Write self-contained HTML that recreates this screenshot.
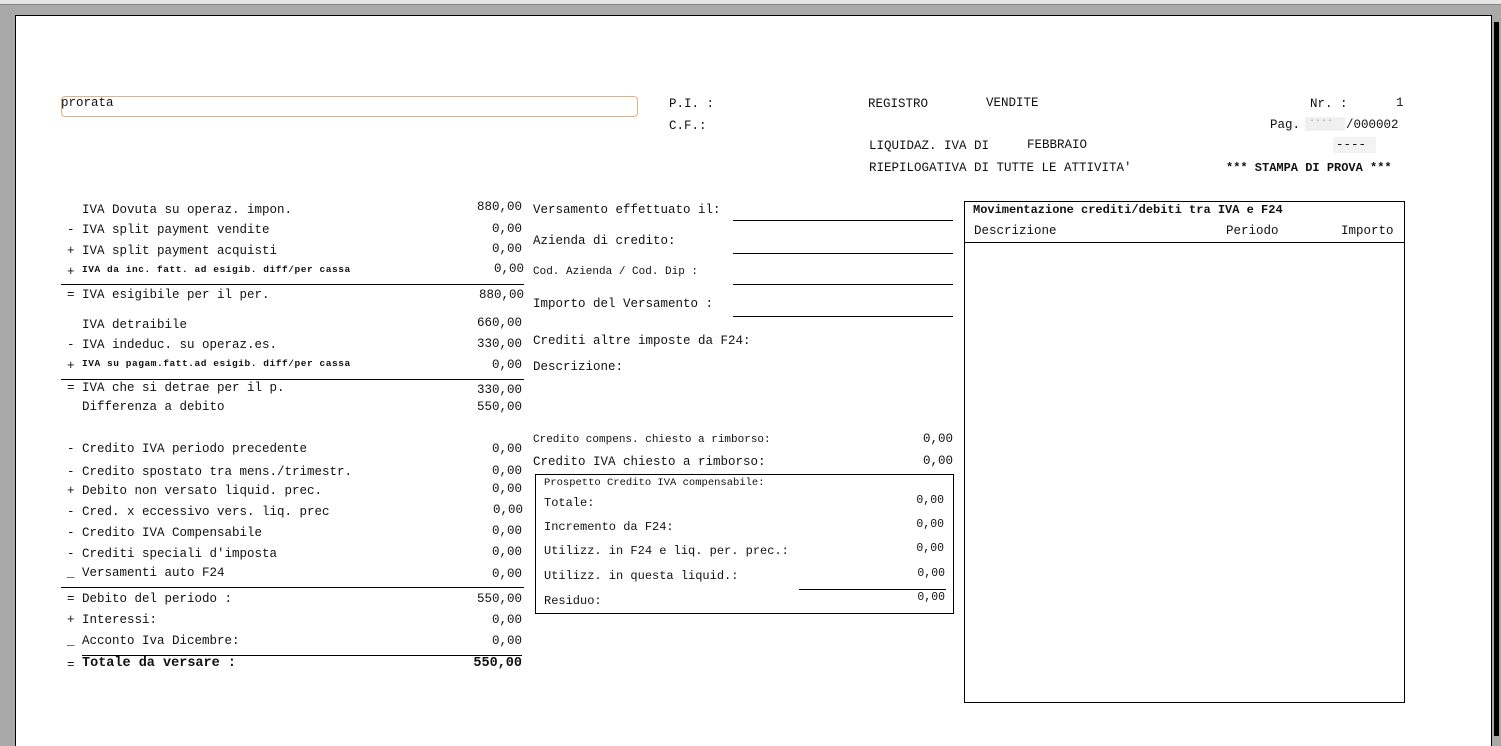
<!DOCTYPE html>
<html><head><meta charset="utf-8"><style>
html,body{margin:0;padding:0;width:1501px;height:736px;overflow:hidden;background:#a9a9a9;}
#top{position:absolute;left:0;top:0;width:1501px;height:4px;background:#e4e4e4;border-bottom:1px solid #888;}
#page{position:absolute;left:15px;top:15px;width:1475px;height:730px;background:#fff;border-left:1px solid #000;border-top:1px solid #000;border-right:1px solid #000;}
#shadow{position:absolute;left:1494px;top:22px;width:5px;height:714px;background:#000;}
.t{position:absolute;white-space:pre;font-family:"Liberation Mono","Courier New",monospace;font-size:12.5px;line-height:14px;color:#111;}
.s{font-size:11px;}
.xs{font-size:9.5px;font-weight:bold;letter-spacing:0.55px;}
.b{font-weight:bold;}
.r{text-align:right;}
.h{position:absolute;height:1px;background:#000;}
.box{position:absolute;border:1px solid #000;}
</style></head><body>
<div id="top"></div>
<div id="page"></div>
<div id="shadow"></div>

<!-- header -->
<div style="position:absolute;left:61px;top:96px;width:575px;height:19px;border:1px solid #e8b27e;border-radius:4px;"></div>
<div class="t" style="left:61px;top:96px">prorata</div>
<div class="t" style="left:669px;top:97px">P.I. :</div>
<div class="t" style="left:669px;top:119px">C.F.:</div>
<div class="t" style="left:868px;top:97px">REGISTRO</div>
<div class="t" style="left:986px;top:96px">VENDITE</div>
<div class="t" style="left:1310px;top:97px">Nr. :</div>
<div class="t" style="left:1396px;top:96px">1</div>
<div style="position:absolute;left:1305px;top:117px;width:40px;height:14px;background:#f0f0f0"></div>
<div class="t" style="left:1270px;top:118px">Pag.</div>
<div class="t" style="left:1309px;top:115px;color:#999;font-size:10px">····</div>
<div class="t" style="left:1346px;top:118px">/000002</div>
<div class="t" style="left:869px;top:139px">LIQUIDAZ. IVA DI</div>
<div class="t" style="left:1027px;top:138px">FEBBRAIO</div>
<div style="position:absolute;left:1333px;top:137px;width:43px;height:16px;background:#f3f3f3"></div>
<div class="t" style="left:1336px;top:138px">----</div>
<div class="t" style="left:869px;top:161px">RIEPILOGATIVA DI TUTTE LE ATTIVITA'</div>
<div class="t b" style="left:1226px;top:161px;font-size:12px">*** STAMPA DI PROVA ***</div>

<!-- left column -->
<div class="t" style="left:82px;top:203px">IVA Dovuta su operaz. impon.</div><div class="t r" style="right:979px;top:200px">880,00</div>
<div class="t" style="left:67px;top:223px">- IVA split payment vendite</div><div class="t r" style="right:979px;top:222px">0,00</div>
<div class="t" style="left:67px;top:244px">+ IVA split payment acquisti</div><div class="t r" style="right:979px;top:242px">0,00</div>
<div class="t" style="left:67px;top:265px">+</div><div class="t xs" style="left:82px;top:263px">IVA da inc. fatt. ad esigib. diff/per cassa</div><div class="t r" style="right:977px;top:262px">0,00</div>
<div class="h" style="left:61px;top:284px;width:463px"></div>
<div class="t" style="left:67px;top:288px">= IVA esigibile per il per.</div><div class="t r" style="right:977px;top:288px">880,00</div>
<div class="t" style="left:82px;top:318px">IVA detraibile</div><div class="t r" style="right:979px;top:316px">660,00</div>
<div class="t" style="left:67px;top:338px">- IVA indeduc. su operaz.es.</div><div class="t r" style="right:979px;top:337px">330,00</div>
<div class="t" style="left:67px;top:359px">+</div><div class="t xs" style="left:82px;top:357px">IVA su pagam.fatt.ad esigib. diff/per cassa</div><div class="t r" style="right:979px;top:358px">0,00</div>
<div class="h" style="left:61px;top:379px;width:463px"></div>
<div class="t" style="left:67px;top:381px">= IVA che si detrae per il p.</div><div class="t r" style="right:979px;top:383px">330,00</div>
<div class="t" style="left:82px;top:400px">Differenza a debito</div><div class="t r" style="right:979px;top:400px">550,00</div>
<div class="t" style="left:67px;top:442px">- Credito IVA periodo precedente</div><div class="t r" style="right:979px;top:442px">0,00</div>
<div class="t" style="left:67px;top:465px">- Credito spostato tra mens./trimestr.</div><div class="t r" style="right:979px;top:464px">0,00</div>
<div class="t" style="left:67px;top:484px">+ Debito non versato liquid. prec.</div><div class="t r" style="right:979px;top:482px">0,00</div>
<div class="t" style="left:67px;top:505px">- Cred. x eccessivo vers. liq. prec</div><div class="t r" style="right:978px;top:503px">0,00</div>
<div class="t" style="left:67px;top:526px">- Credito IVA Compensabile</div><div class="t r" style="right:979px;top:524px">0,00</div>
<div class="t" style="left:67px;top:547px">- Crediti speciali d'imposta</div><div class="t r" style="right:979px;top:545px">0,00</div>
<div class="t" style="left:67px;top:566px">_ Versamenti auto F24</div><div class="t r" style="right:979px;top:567px">0,00</div>
<div class="h" style="left:61px;top:587px;width:463px"></div>
<div class="t" style="left:67px;top:592px">= Debito del periodo :</div><div class="t r" style="right:979px;top:592px">550,00</div>
<div class="t" style="left:67px;top:613px">+ Interessi:</div><div class="t r" style="right:979px;top:613px">0,00</div>
<div class="t" style="left:67px;top:634px">_ Acconto Iva Dicembre:</div><div class="t r" style="right:979px;top:634px">0,00</div>
<div class="h" style="left:82px;top:655px;width:440px"></div>
<div class="t" style="left:67px;top:658px">=</div><div class="t b" style="left:82px;top:657px;font-size:13.5px">Totale da versare :</div><div class="t b r" style="right:979px;top:657px;font-size:13.5px">550,00</div>

<!-- middle -->
<div class="t" style="left:533px;top:203px">Versamento effettuato il:</div><div class="h" style="left:733px;top:220px;width:220px"></div>
<div class="t" style="left:533px;top:234px">Azienda di credito:</div><div class="h" style="left:733px;top:253px;width:220px"></div>
<div class="t s" style="left:533px;top:265px">Cod. Azienda / Cod. Dip :</div><div class="h" style="left:733px;top:284px;width:220px"></div>
<div class="t" style="left:533px;top:297px">Importo del Versamento :</div><div class="h" style="left:733px;top:316px;width:220px"></div>
<div class="t" style="left:533px;top:334px">Crediti altre imposte da F24:</div>
<div class="t" style="left:533px;top:360px">Descrizione:</div>
<div class="t s" style="left:533px;top:433px">Credito compens. chiesto a rimborso:</div><div class="t r" style="right:548px;top:432px">0,00</div>
<div class="t" style="left:533px;top:455px">Credito IVA chiesto a rimborso:</div><div class="t r" style="right:548px;top:454px">0,00</div>
<div class="box" style="left:535px;top:474px;width:417px;height:138px"></div>
<div class="t s" style="left:544px;top:476px;font-size:10.5px">Prospetto Credito IVA compensabile:</div>
<div class="t s" style="left:544px;top:496px;font-size:12px">Totale:</div><div class="t s r" style="right:557px;top:494px;font-size:11.5px">0,00</div>
<div class="t s" style="left:544px;top:520px;font-size:12px">Incremento da F24:</div><div class="t s r" style="right:557px;top:518px;font-size:11.5px">0,00</div>
<div class="t s" style="left:544px;top:544px;font-size:12px">Utilizz. in F24 e liq. per. prec.:</div><div class="t s r" style="right:557px;top:542px;font-size:11.5px">0,00</div>
<div class="t s" style="left:544px;top:569px;font-size:12px">Utilizz. in questa liquid.:</div><div class="t s r" style="right:556px;top:567px;font-size:11.5px">0,00</div>
<div class="h" style="left:799px;top:589px;width:147px"></div>
<div class="t s" style="left:544px;top:594px;font-size:12px">Residuo:</div><div class="t s r" style="right:556px;top:591px;font-size:11.5px">0,00</div>

<!-- right box -->
<div class="box" style="left:964px;top:201px;width:439px;height:500px"></div>
<div class="t b" style="left:973px;top:203px;font-size:12px">Movimentazione crediti/debiti tra IVA e F24</div>
<div class="t" style="left:974px;top:224px">Descrizione</div>
<div class="t" style="left:1226px;top:224px">Periodo</div>
<div class="t" style="left:1341px;top:224px">Importo</div>
<div class="h" style="left:964px;top:242px;width:440px"></div>
</body></html>
